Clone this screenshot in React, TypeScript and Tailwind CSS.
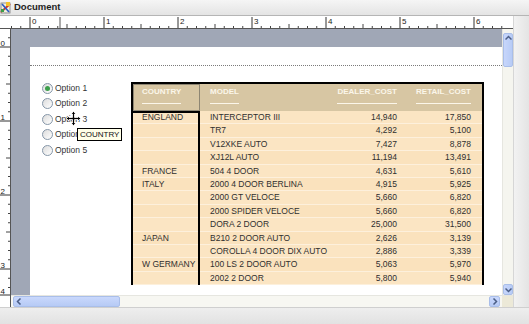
import React from 'react';

const rows: [string, string, string, string][] = [
  ['ENGLAND', 'INTERCEPTOR III', '14,940', '17,850'],
  ['', 'TR7', '4,292', '5,100'],
  ['', 'V12XKE AUTO', '7,427', '8,878'],
  ['', 'XJ12L AUTO', '11,194', '13,491'],
  ['FRANCE', '504 4 DOOR', '4,631', '5,610'],
  ['ITALY', '2000 4 DOOR BERLINA', '4,915', '5,925'],
  ['', '2000 GT VELOCE', '5,660', '6,820'],
  ['', '2000 SPIDER VELOCE', '5,660', '6,820'],
  ['', 'DORA 2 DOOR', '25,000', '31,500'],
  ['JAPAN', 'B210 2 DOOR AUTO', '2,626', '3,139'],
  ['', 'COROLLA 4 DOOR DIX AUTO', '2,886', '3,339'],
  ['W GERMANY', '100 LS 2 DOOR AUTO', '5,063', '5,970'],
  ['', '2002 2 DOOR', '5,800', '5,940'],
];

const options = ['Option 1', 'Option 2', 'Option 3', 'Option 4', 'Option 5'];

const DocIcon = () => (
  <svg width="12" height="13" viewBox="0 0 12 13">
    <rect x="1" y="2" width="9" height="10" fill="#f4f0e0" stroke="#7a7a7a" strokeWidth="0.8" />
    <path d="M1 11 L10 3" stroke="#d23a2a" strokeWidth="2" />
    <path d="M2 3 L9 11" stroke="#2a5bc4" strokeWidth="1.6" />
    <rect x="6" y="1" width="4" height="4" fill="#f2c230" />
    <rect x="1" y="8" width="3" height="3" fill="#3aa04a" />
  </svg>
);

const HRuler = () => {
  const ticks = [];
  for (let i = -2; i < 52; i++) {
    const x = 19 + i * 9.25;
    if (x < 0 || x > 501) continue;
    const m = ((i % 8) + 8) % 8;
    if (m === 0) {
      ticks.push(<line key={i} x1={x} x2={x} y1={1} y2={12} stroke="#333" strokeWidth="1" />);
      ticks.push(
        <text key={'t' + i} x={x + 2} y={8} fontSize="8" fill="#222" fontFamily="Liberation Sans, Arial, sans-serif">
          {i / 8}
        </text>
      );
    } else {
      const h = m === 4 ? 4 : 2;
      ticks.push(<line key={i} x1={x} x2={x} y1={12 - h} y2={12} stroke="#444" strokeWidth="1" />);
    }
  }
  return (
    <svg width="502" height="13" className="block bg-white">
      <line x1="49" x2="49" y1="1" y2="12" stroke="#555" />
      {ticks}
      <line x1="0" x2="502" y1="12.5" y2="12.5" stroke="#555" />
    </svg>
  );
};

const VRuler = () => {
  const ticks = [];
  for (let i = -1; i < 28; i++) {
    const y = 18 + i * 9.25;
    if (y < 0 || y > 262) continue;
    const m = ((i % 8) + 8) % 8;
    if (m === 0) {
      ticks.push(<line key={i} x1={0} x2={10} y1={y} y2={y} stroke="#333" />);
      ticks.push(
        <text key={'t' + i} x={0.5} y={y - 1} fontSize="8" fill="#222" fontFamily="Liberation Sans, Arial, sans-serif">
          {i / 8}
        </text>
      );
    } else {
      const w = m === 4 ? 4 : 2;
      ticks.push(<line key={i} x1={10 - w} x2={10} y1={y} y2={y} stroke="#444" />);
    }
  }
  return (
    <svg width="11" height="278" className="block bg-white">
      {ticks}
      <line x1={0} x2={10} y1={266} y2={266} stroke="#333" />
      <text x={0.5} y={265} fontSize="8" fill="#222" fontFamily="Liberation Sans, Arial, sans-serif">
        4
      </text>
      <line x1="10.5" x2="10.5" y1="0" y2="278" stroke="#555" />
    </svg>
  );
};

const Radio = ({ checked }: { checked?: boolean }) => (
  <span className="w-[11px] h-[11px] rounded-full border border-[#8596a8] bg-gradient-to-br from-[#dcdcdc] to-white flex items-center justify-center shrink-0">
    {checked && <span className="w-[5px] h-[5px] rounded-full bg-[#3c9f4b]" />}
  </span>
);

const MoveCursor = () => (
  <svg width="15" height="15" viewBox="0 0 15 15">
    <path
      d="M7.5 0.5 L10 3 H8.5 V6.5 H12 V5 L14.5 7.5 L12 10 V8.5 H8.5 V12 H10 L7.5 14.5 L5 12 H6.5 V8.5 H3 V10 L0.5 7.5 L3 5 V6.5 H6.5 V3 H5 Z"
      fill="#000"
      stroke="#fff"
      strokeWidth="0.8"
    />
  </svg>
);

const HeadText = ({ children }: { children: React.ReactNode }) => (
  <span className="block leading-[10px] pb-[6px] border-b border-[#fbf6ea] text-[8px] font-bold text-[#fbf6ea] whitespace-nowrap">
    {children}
  </span>
);

const ReportTable = () => (
  <div className="w-[353px] border-2 border-b-0 border-black">
    <div className="grid grid-cols-[67px_120px_80px_82px] h-[27px] bg-[#d7c6a3]">
      <div className="flex items-start border border-[#8e8673] pl-[8px] pt-[2px]">
        <HeadText>COUNTRY</HeadText>
      </div>
      <div className="flex items-start pl-[10px] pt-[3px]">
        <HeadText>MODEL</HeadText>
      </div>
      <div className="flex items-start justify-end pr-[3px] pt-[3px]">
        <HeadText>DEALER_COST</HeadText>
      </div>
      <div className="flex items-start justify-end pr-[11px] pt-[3px]">
        <HeadText>RETAIL_COST</HeadText>
      </div>
    </div>
    <div className="relative">
      {rows.map((r, i) => (
        <div
          key={i}
          className={
            'grid grid-cols-[67px_120px_80px_82px] h-[13.4px] items-center text-[8.5px] text-[#2f2f2f] border-b border-[#fdf0dc] ' +
            (i % 2 === 0 ? 'bg-[#fbe5c3]' : 'bg-[#fae2bd]')
          }
        >
          <span className="pl-[9px] whitespace-nowrap">{r[0]}</span>
          <span className="pl-[10px] whitespace-nowrap">{r[1]}</span>
          <span className="pr-[3px] text-right">{r[2]}</span>
          <span className="pr-[11px] text-right">{r[3]}</span>
        </div>
      ))}
      <div className="absolute left-0 top-0 bottom-0 w-[67px] border-t-2 border-r-2 border-black pointer-events-none" />
    </div>
  </div>
);

const Page = () => (
  <div className="relative w-full h-full bg-white">
    <div className="h-[18px]" />
    <div className="border-t border-dotted border-[#7a7a7a]" />
    <div className="flex pt-[16px] pl-[12px]">
      <div className="w-[89px] -mt-[1.7px]">
        {options.map((o, i) => (
          <div key={o} className="h-[15.5px] flex items-center gap-[2px]">
            <Radio checked={i === 0} />
            <span className="text-[8.5px] text-[#333]">{o}</span>
          </div>
        ))}
      </div>
      <ReportTable />
    </div>
    <div className="absolute left-[36px] top-[64px]">
      <MoveCursor />
    </div>
    <div className="absolute left-[47px] top-[81px] h-[13px] px-[2px] border border-black bg-[#ffffe8] text-[8px] leading-[11px] text-[#111]">
      COUNTRY
    </div>
  </div>
);

const VScroll = () => (
  <div className="w-[11px] h-full flex flex-col bg-[#f5f5ef] border-l border-[#e6e6e0]">
    <div className="mt-[4px] h-[34px] rounded-[2px] bg-gradient-to-r from-[#c7d6fb] to-[#b7cbf6] border border-[#a9bee9] flex justify-center pt-[1px]">
      <svg width="7" height="6" viewBox="0 0 7 6">
        <path d="M0.5 4.5 L3.5 1.5 L6.5 4.5" fill="none" stroke="#4b5e86" strokeWidth="1.5" />
      </svg>
    </div>
    <div className="flex-1" />
    <div className="h-[11px] rounded-[2px] bg-gradient-to-r from-[#c7d6fb] to-[#b7cbf6] border border-[#a9bee9] flex items-center justify-center">
      <svg width="7" height="6" viewBox="0 0 7 6">
        <path d="M0.5 1.5 L3.5 4.5 L6.5 1.5" fill="none" stroke="#4b5e86" strokeWidth="1.5" />
      </svg>
    </div>
  </div>
);

const HScroll = () => (
  <div className="h-[12px] flex bg-[#f7f7f2] border-t border-[#e6e6e0]">
    <div className="ml-[2px] w-[107px] rounded-[2px] bg-gradient-to-b from-[#c9d8fc] to-[#b6caf5] border border-[#a9bee9] flex items-center pl-[2px]">
      <svg width="6" height="7" viewBox="0 0 6 7">
        <path d="M4.5 0.5 L1.5 3.5 L4.5 6.5" fill="none" stroke="#4b5e86" strokeWidth="1.5" />
      </svg>
    </div>
    <div className="flex-1" />
    <div className="w-[11px] mr-[2px] rounded-[2px] bg-gradient-to-b from-[#c9d8fc] to-[#b6caf5] border border-[#a9bee9] flex items-center justify-center">
      <svg width="6" height="7" viewBox="0 0 6 7">
        <path d="M1.5 0.5 L4.5 3.5 L1.5 6.5" fill="none" stroke="#4b5e86" strokeWidth="1.5" />
      </svg>
    </div>
    <div className="w-[11px] bg-[#ece9d8]" />
  </div>
);

export default function App() {
  return (
    <div className="w-[529px] h-[324px] overflow-hidden flex flex-col bg-[#e8e8e8] font-['Liberation_Sans',Arial,sans-serif]">
      <div className="h-[16px] flex items-center gap-[2px] bg-gradient-to-b from-[#f5f5f5] to-[#e4e4e4] border-b border-[#b5b5b5]">
        <DocIcon />
        <span className="text-[9.5px] font-bold text-[#1e1e1e]">Document</span>
      </div>
      <div className="flex h-[291px]">
        <div className="w-[11px] flex flex-col">
          <div className="h-[13px] bg-white border-b border-[#555]" />
          <VRuler />
        </div>
        <div className="w-[502px] flex flex-col">
          <HRuler />
          <div className="h-[266px] flex">
            <div className="w-[491px] h-full bg-[#a0a7b6] pl-[19px] pt-[18px]">
              <Page />
            </div>
            <VScroll />
          </div>
          <HScroll />
        </div>
        <div className="flex-1 bg-gradient-to-r from-[#f2f2f2] to-[#e4e4e4] border-l border-[#d6d6d6]" />
      </div>
      <div className="flex-1 bg-gradient-to-b from-[#eeeeee] to-[#e2e2e2] border-t border-[#cfcfcf]" />
    </div>
  );
}
